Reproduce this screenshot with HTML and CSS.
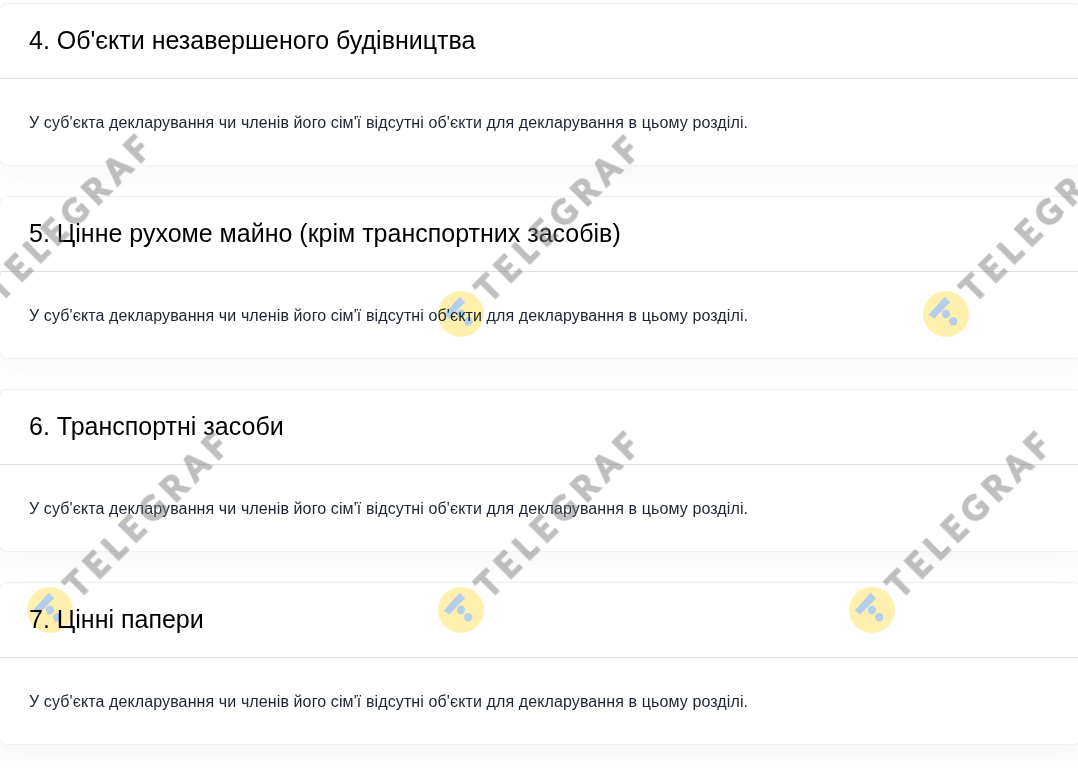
FILE: index.html
```html
<!DOCTYPE html>
<html lang="uk">
<head>
<meta charset="utf-8">
<title>Декларація</title>
<link rel="stylesheet" href="styles.css">
</head>
<body>
<main class="page">
  <section class="card">
    <h2 class="card-title">4. Об'єкти незавершеного будівництва</h2>
    <p class="card-body">У суб'єкта декларування чи членів його сім'ї відсутні об'єкти для декларування в цьому розділі.</p>
  </section>
  <section class="card">
    <h2 class="card-title">5. Цінне рухоме майно (крім транспортних засобів)</h2>
    <p class="card-body">У суб'єкта декларування чи членів його сім'ї відсутні об'єкти для декларування в цьому розділі.</p>
  </section>
  <section class="card">
    <h2 class="card-title">6. Транспортні засоби</h2>
    <p class="card-body">У суб'єкта декларування чи членів його сім'ї відсутні об'єкти для декларування в цьому розділі.</p>
  </section>
  <section class="card">
    <h2 class="card-title">7. Цінні папери</h2>
    <p class="card-body">У суб'єкта декларування чи членів його сім'ї відсутні об'єкти для декларування в цьому розділі.</p>
  </section>
</main>
<div class="wm wm-a"><span class="wm-text">TELEGRAF</span></div>
<div class="wm wm-b"><svg class="wm-logo" viewBox="-23 -23 46 46"><circle r="23" fill="#fff0b0"/><polygon points="-17.3,0.7 -11.7,4.6 4.2,-11.7 -1.4,-17.3" fill="#b3cfec"/><circle r="4.2" fill="#b3cfec"/><circle cx="7.2" cy="7.2" r="4.2" fill="#b3cfec"/></svg><span class="wm-text">TELEGRAF</span></div>
<div class="wm wm-c"><svg class="wm-logo" viewBox="-23 -23 46 46"><circle r="23" fill="#fff0b0"/><polygon points="-17.3,0.7 -11.7,4.6 4.2,-11.7 -1.4,-17.3" fill="#b3cfec"/><circle r="4.2" fill="#b3cfec"/><circle cx="7.2" cy="7.2" r="4.2" fill="#b3cfec"/></svg><span class="wm-text">TELEGRAF</span></div>
<div class="wm wm-d"><svg class="wm-logo" viewBox="-23 -23 46 46"><circle r="23" fill="#fff0b0"/><polygon points="-17.3,0.7 -11.7,4.6 4.2,-11.7 -1.4,-17.3" fill="#b3cfec"/><circle r="4.2" fill="#b3cfec"/><circle cx="7.2" cy="7.2" r="4.2" fill="#b3cfec"/></svg><span class="wm-text">TELEGRAF</span></div>
<div class="wm wm-e"><svg class="wm-logo" viewBox="-23 -23 46 46"><circle r="23" fill="#fff0b0"/><polygon points="-17.3,0.7 -11.7,4.6 4.2,-11.7 -1.4,-17.3" fill="#b3cfec"/><circle r="4.2" fill="#b3cfec"/><circle cx="7.2" cy="7.2" r="4.2" fill="#b3cfec"/></svg><span class="wm-text">TELEGRAF</span></div>
<div class="wm wm-f"><svg class="wm-logo" viewBox="-23 -23 46 46"><circle r="23" fill="#fff0b0"/><polygon points="-17.3,0.7 -11.7,4.6 4.2,-11.7 -1.4,-17.3" fill="#b3cfec"/><circle r="4.2" fill="#b3cfec"/><circle cx="7.2" cy="7.2" r="4.2" fill="#b3cfec"/></svg><span class="wm-text">TELEGRAF</span></div>
</body>
</html>
```
FILE: styles.css
```css
html, body {
  margin: 0;
  height: 768px;
  overflow: hidden;
  background: #fff;
}

body {
  position: relative;
  font-family: "Liberation Sans", Arial, sans-serif;
}

.page {
  display: flex;
  flex-direction: column;
  gap: 30px;
  padding-top: 3px;
  margin: 0 -4px 0 -1px;
}

.card {
  background: #fff;
  border: 1px solid #f0f1f5;
  border-top-color: #edf1f7;
  border-radius: 8px;
  box-shadow: 0 12px 22px rgba(0, 0, 0, 0.03);
}

.card-title {
  margin: 0;
  height: 74px;
  padding-left: 29px;
  border-bottom: 1px solid #dedede;
  font-size: 25px;
  font-weight: 400;
  line-height: 72px;
  color: #000;
}

.card-body {
  margin: 0;
  height: 86px;
  padding-left: 29px;
  font-size: 16px;
  letter-spacing: 0.11px;
  line-height: 87px;
  color: #1c2530;
}

.wm {
  position: absolute;
  width: 0;
  height: 0;
  pointer-events: none;
}

.wm-a { left: -28px; top: 313px; }
.wm-b { left: 461px; top: 313.5px; }
.wm-c { left: 946px; top: 313.5px; }
.wm-d { left: 50px; top: 610px; }
.wm-e { left: 461px; top: 610px; }
.wm-f { left: 872px; top: 610px; }

.wm-logo {
  position: absolute;
  left: -23px;
  top: -23px;
  width: 46px;
  height: 46px;
  mix-blend-mode: multiply;
}

.wm-text {
  position: absolute;
  left: 32px;
  top: -7px;
  transform-origin: 0 100%;
  transform: translateY(-100%) rotate(-45deg);
  font-family: Lato, sans-serif;
  font-size: 33.5px;
  font-weight: 900;
  line-height: 1;
  letter-spacing: 7.2px;
  white-space: nowrap;
  color: #787878;
  -webkit-text-stroke: 1.4px #787878;
  opacity: 0.47;
  filter: blur(0.3px);
}
```
